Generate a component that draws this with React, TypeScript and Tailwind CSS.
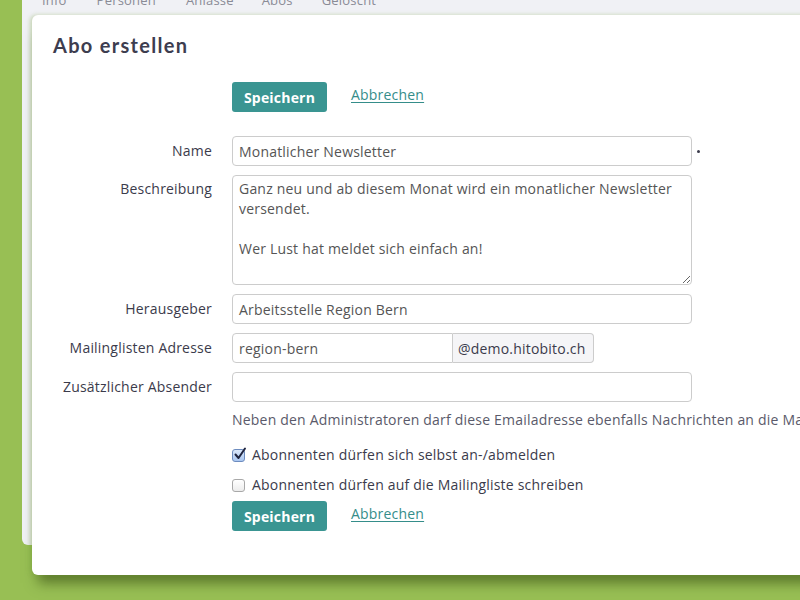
import React from "react";

const font = { fontFamily: '"Open Sans", "Noto Sans", sans-serif', letterSpacing: "0.2px" };

function Row({ label, children, top = "pt-[5px]" }: { label: string; children: React.ReactNode; top?: string }) {
  return (
    <div className="flex items-start">
      <div className={`w-[180px] shrink-0 text-right text-[14px] leading-[20px] text-[#3b3b4b] ${top}`}>{label}</div>
      <div className="ml-[20px] flex items-center">{children}</div>
    </div>
  );
}

function Input({ value, w = "w-[460px]" }: { value: string; w?: string }) {
  return (
    <div className={`${w} h-[30px] border border-[#cccccc] rounded-[4px] bg-white px-[6px] flex items-center text-[14px] text-[#555555] whitespace-nowrap overflow-hidden`}>
      {value}
    </div>
  );
}

function Buttons() {
  return (
    <div className="flex items-center pl-[200px]">
      <div className="w-[95px] h-[30px] rounded-[3px] bg-[#3a9592] text-white font-bold text-[14px] flex items-center justify-center">
        Speichern
      </div>
      <span className="ml-[24px] mb-[5px] text-[14px] text-[#358d8a] underline underline-offset-[2px]">Abbrechen</span>
    </div>
  );
}

function Check({ checked }: { checked: boolean }) {
  return checked ? (
    <div className="w-[13px] h-[13px] rounded-[3px] border border-[#6d8cbf] bg-gradient-to-b from-[#dbe8fb] to-[#a9c6f0] relative">
      <svg viewBox="0 0 14 14" className="absolute left-[0px] top-[-3px] w-[14px] h-[14px]">
        <path d="M2.5 7.5 L5.5 11 L12 1.5" fill="none" stroke="#1f2540" strokeWidth="2" strokeLinecap="round" strokeLinejoin="round" />
      </svg>
    </div>
  ) : (
    <div className="w-[13px] h-[13px] rounded-[3px] border border-[#a8a8a8] bg-gradient-to-b from-white to-[#ececec]" />
  );
}

export default function App() {
  return (
    <div className="w-[800px] h-[600px] bg-[#98bf54] overflow-hidden" style={font}>
      <div className="ml-[22px] h-[545px] bg-[#f0f1f5] rounded-bl-[6px]">
        <div className="h-[15px] overflow-hidden">
          <div className="flex mt-[-9px] text-[13px] text-[#8a8b96] leading-[18px] tracking-[0.2px]">
            <span className="ml-[20px]">Info</span>
            <span className="ml-[30px]">Personen</span>
            <span className="ml-[30px]">Anlässe</span>
            <span className="ml-[28px]">Abos</span>
            <span className="ml-[29px]">Gelöscht</span>
          </div>
        </div>
        <div className="ml-[10px] w-[800px] h-[560px] bg-white rounded-[6px] shadow-[-2px_0_4px_rgba(120,160,60,0.35),0_14px_12px_-6px_rgba(40,60,10,0.55)]">
          <div className="pl-[21px] pt-[18px] text-[20px] leading-[24px] font-bold text-[#3d3d4f] tracking-[1.3px]" style={{ fontFamily: 'Lato, "Open Sans", sans-serif' }}>
            Abo erstellen
          </div>
          <div className="mt-[25px]">
            <Buttons />
          </div>
          <div className="mt-[24px] flex flex-col gap-[9px]">
            <Row label="Name">
              <Input value="Monatlicher Newsletter" />
              <div className="ml-[5px] w-[3px] h-[3px] rounded-full bg-[#3b3b4b]" />
            </Row>
            <Row label="Beschreibung" top="pt-[4px]">
              <textarea
                readOnly
                className="w-[460px] h-[110px] border border-[#cccccc] rounded-[4px] bg-white px-[6px] py-[3px] text-[14px] leading-[20px] text-[#555555] outline-none"
                style={font}
                value={"Ganz neu und ab diesem Monat wird ein monatlicher Newsletter versendet.\n\nWer Lust hat meldet sich einfach an!"}
              />
            </Row>
            <Row label="Herausgeber">
              <Input value="Arbeitsstelle Region Bern" />
            </Row>
            <Row label="Mailinglisten Adresse">
              <div className="flex">
                <div className="w-[221px] h-[30px] border border-[#cccccc] rounded-l-[4px] bg-white px-[6px] flex items-center text-[14px] text-[#555555]">
                  region-bern
                </div>
                <div className="w-[141px] h-[30px] border border-l-0 border-[#cccccc] rounded-r-[4px] bg-[#f5f5f7] px-[5px] flex items-center text-[14px] text-[#3b3b4b] whitespace-nowrap">
                  @demo.hitobito.ch
                </div>
              </div>
            </Row>
            <Row label="Zusätzlicher Absender">
              <Input value="" />
            </Row>
          </div>
          <div className="mt-[8px] pl-[200px] text-[14px] leading-[20px] text-[#5a5a6a] whitespace-nowrap">
            Neben den Administratoren darf diese Emailadresse ebenfalls Nachrichten an die Mailingliste schicken.
          </div>
          <div className="mt-[15px] pl-[200px] flex flex-col gap-[10px] text-[14px] leading-[20px] text-[#3b3b4b]">
            <div className="flex items-center">
              <Check checked />
              <span className="ml-[7px]">Abonnenten dürfen sich selbst an-/abmelden</span>
            </div>
            <div className="flex items-center">
              <Check checked={false} />
              <span className="ml-[7px]">Abonnenten dürfen auf die Mailingliste schreiben</span>
            </div>
          </div>
          <div className="mt-[6px]">
            <Buttons />
          </div>
        </div>
      </div>
    </div>
  );
}
